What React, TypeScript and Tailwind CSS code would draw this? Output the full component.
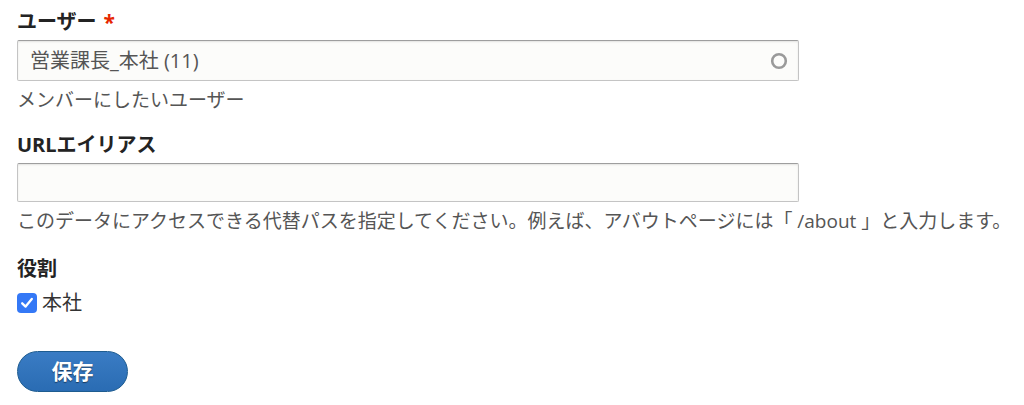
import React from 'react';

const font = { fontFamily: '"Open Sans", "Noto Sans CJK JP", sans-serif' };

function Label({ children, required }: { children: React.ReactNode; required?: boolean }) {
  return (
    <div className="h-[24px] flex items-center text-[20px] font-bold text-[#232323] leading-none">
      {children}
      {required && <span className="ml-[7px] text-[#e62600] text-[21px]">*</span>}
    </div>
  );
}

function Description({ children }: { children: React.ReactNode }) {
  return <div className="h-[24px] flex items-center text-[19px] text-[#555] leading-none whitespace-nowrap">{children}</div>;
}

export default function App() {
  return (
    <div className="w-[1024px] h-[405px] bg-white pl-[17px] pt-[10px] overflow-hidden" style={font}>
      <Label required>ユーザー</Label>
      <div className="mt-[6px] w-[782px] h-[41px] flex items-center justify-between pl-[12px] pr-[9px] bg-[#fcfcfa] border border-[#c4c4c4] border-t-[#9e9e9e] rounded-[2px] shadow-[inset_0_1px_2px_rgba(0,0,0,0.1)]">
        <span className="text-[20px] text-[#555] leading-none">営業課長_本社 (11)</span>
        <svg width="20" height="20" viewBox="0 0 20 20">
          <circle cx="10" cy="10" r="6.8" fill="none" stroke="#9a9a9a" strokeWidth="2.6" />
        </svg>
      </div>
      <div className="mt-[7px]">
        <Description>メンバーにしたいユーザー</Description>
      </div>

      <div className="mt-[21px]">
        <Label>URLエイリアス</Label>
      </div>
      <div className="mt-[6px] w-[782px] h-[39px] bg-[#fcfcfa] border border-[#c4c4c4] border-t-[#9e9e9e] rounded-[2px] shadow-[inset_0_1px_2px_rgba(0,0,0,0.1)]" />
      <div className="mt-[7px]">
        <Description>このデータにアクセスできる代替パスを指定してください。例えば、アバウトページには「 /about 」と入力します。</Description>
      </div>

      <div className="mt-[24px]">
        <Label>役割</Label>
      </div>
      <div className="mt-[10px] flex items-center gap-[5px] h-[24px]">
        <span className="w-[20px] h-[20px] rounded-[4px] bg-[#3478f6] flex items-center justify-center">
          <svg width="14" height="14" viewBox="0 0 14 14">
            <path d="M2.2 7.3 L5.6 10.6 L11.8 3" fill="none" stroke="#fff" strokeWidth="2.3" strokeLinecap="round" strokeLinejoin="round" />
          </svg>
        </span>
        <span className="text-[20px] text-[#333] leading-none">本社</span>
      </div>

      <button className="mt-[36px] w-[111px] h-[41px] rounded-full border border-[#1e5c90] bg-gradient-to-t from-[#2a6cb3] to-[#3a7cc4] text-white text-[21px] font-bold [text-shadow:0_1px_1px_rgba(0,0,0,0.5)] flex items-center justify-center">
        保存
      </button>
    </div>
  );
}
